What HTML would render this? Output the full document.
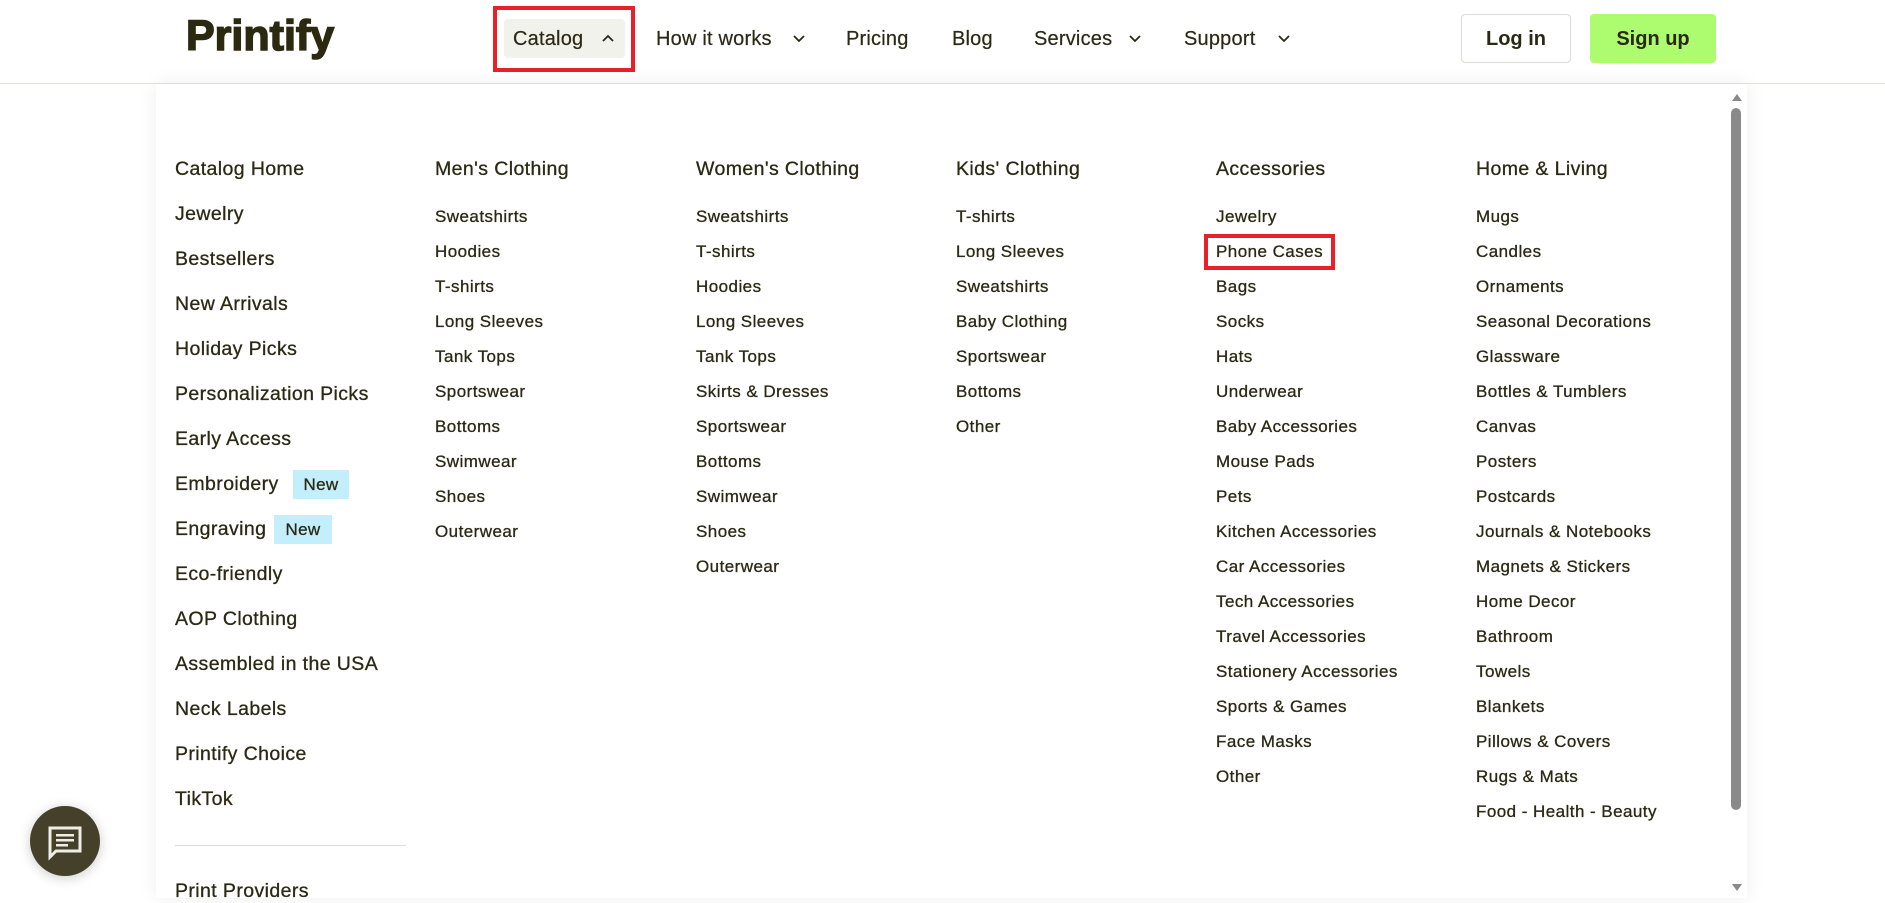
<!DOCTYPE html>
<html><head><meta charset="utf-8"><style>
*{margin:0;padding:0;box-sizing:border-box}
body{width:1885px;height:898px;overflow:hidden;background:#fff;font-family:"Liberation Sans",sans-serif;color:#2b2914;position:relative}
.hdr{position:absolute;left:0;top:0;width:1885px;height:84px;border-bottom:1px solid #e4e2dc;background:#fff}
.nav{position:absolute;top:28px;font-size:20px;color:#2b2914;letter-spacing:.2px;-webkit-text-stroke:.2px #2b2914}
.chev{position:absolute;top:34px;width:14px;height:9px}
.panel{position:absolute;left:156px;top:84px;width:1591px;height:814px;background:#fff;box-shadow:0 0 18px rgba(0,0,0,.07)}
.h{position:absolute;white-space:nowrap;font-size:19.5px;letter-spacing:.4px;line-height:24px;-webkit-text-stroke:.3px #2b2914}
.s{position:absolute;white-space:nowrap;font-size:17px;letter-spacing:.45px;line-height:22px;-webkit-text-stroke:.3px #2b2914}
.new{position:absolute;background:#c3eefc;font-size:17px;letter-spacing:.3px;text-align:center;line-height:29px;-webkit-text-stroke:.3px #2b2914}
</style></head><body>
<div class="hdr">
<div style="position:absolute;left:186px;top:12px;font-size:43px;font-weight:bold;letter-spacing:0px;color:#2b2a10;-webkit-text-stroke:1.5px #2b2a10">Printify</div>
<div style="position:absolute;left:493px;top:6px;width:142px;height:66px;border:4px solid #e8202a"></div>
<div style="position:absolute;left:504px;top:19px;width:121px;height:39px;background:#f2f2ec;border-radius:4px"></div>
<div class="nav" style="left:513px">Catalog</div>
<svg class="chev" style="left:601px" viewBox="0 0 14 9"><path d="M2 7L7 2L12 7" stroke="#2b2914" stroke-width="1.8" fill="none"/></svg>
<div class="nav" style="left:656px">How it works</div>
<svg class="chev" style="left:792px" viewBox="0 0 14 9"><path d="M2 2L7 7L12 2" stroke="#2b2914" stroke-width="1.8" fill="none"/></svg>
<div class="nav" style="left:846px">Pricing</div>
<div class="nav" style="left:952px">Blog</div>
<div class="nav" style="left:1034px">Services</div>
<svg class="chev" style="left:1128px" viewBox="0 0 14 9"><path d="M2 2L7 7L12 2" stroke="#2b2914" stroke-width="1.8" fill="none"/></svg>
<div class="nav" style="left:1184px">Support</div>
<svg class="chev" style="left:1277px" viewBox="0 0 14 9"><path d="M2 2L7 7L12 2" stroke="#2b2914" stroke-width="1.8" fill="none"/></svg>
<div style="position:absolute;left:1461px;top:14px;width:110px;height:49px;border:1px solid #dcdad2;border-radius:4px;text-align:center;line-height:49px;font-size:20px;font-weight:bold">Log in</div>
<div style="position:absolute;left:1590px;top:14px;width:126px;height:49px;background:#adfc6f;border-radius:4px;text-align:center;line-height:50px;font-size:20px;font-weight:bold">Sign up</div>
</div>
<div class="panel">
<div style="position:absolute;left:1576px;top:10px;width:0;height:0;border-left:5px solid transparent;border-right:5px solid transparent;border-bottom:7px solid #8a8a8a"></div>
<div style="position:absolute;left:1575px;top:24px;width:10px;height:702px;background:#8a8a8a;border-radius:5px"></div>
<div style="position:absolute;left:1576px;top:800px;width:0;height:0;border-left:5px solid transparent;border-right:5px solid transparent;border-top:7px solid #8a8a8a"></div>
</div>
<div id="cols"></div>
<div style="position:absolute;left:175px;top:845px;width:231px;height:1px;background:#dedcd4"></div>
<div class="h" style="left:175px;top:879px">Print Providers</div>
<div class="new" style="left:293px;top:470px;width:56px;height:29px">New</div>
<div class="new" style="left:274px;top:515px;width:58px;height:29px">New</div>
<div style="position:absolute;left:1204px;top:234px;width:131px;height:36px;border:4px solid #e8202a"></div>
<div style="position:absolute;left:30px;top:806px;width:70px;height:70px;border-radius:50%;background:#444029;box-shadow:0 2px 12px rgba(0,0,0,.2)"></div>
<svg style="position:absolute;left:46px;top:823px" width="38" height="38" viewBox="0 0 38 38"><path d="M4 5H34V28H10L4 34Z" fill="none" stroke="#efeee6" stroke-width="3"/><rect x="10" y="11" width="18" height="2.5" fill="#efeee6"/><rect x="10" y="16" width="18" height="2.5" fill="#efeee6"/><rect x="10" y="21" width="12" height="2.5" fill="#efeee6"/></svg>
<script>
var L=["Catalog Home","Jewelry","Bestsellers","New Arrivals","Holiday Picks","Personalization Picks","Early Access","Embroidery","Engraving","Eco-friendly","AOP Clothing","Assembled in the USA","Neck Labels","Printify Choice","TikTok"];
var C=[[435,"Men's Clothing",["Sweatshirts","Hoodies","T-shirts","Long Sleeves","Tank Tops","Sportswear","Bottoms","Swimwear","Shoes","Outerwear"]],
[696,"Women's Clothing",["Sweatshirts","T-shirts","Hoodies","Long Sleeves","Tank Tops","Skirts & Dresses","Sportswear","Bottoms","Swimwear","Shoes","Outerwear"]],
[956,"Kids' Clothing",["T-shirts","Long Sleeves","Sweatshirts","Baby Clothing","Sportswear","Bottoms","Other"]],
[1216,"Accessories",["Jewelry","Phone Cases","Bags","Socks","Hats","Underwear","Baby Accessories","Mouse Pads","Pets","Kitchen Accessories","Car Accessories","Tech Accessories","Travel Accessories","Stationery Accessories","Sports & Games","Face Masks","Other"]],
[1476,"Home & Living",["Mugs","Candles","Ornaments","Seasonal Decorations","Glassware","Bottles & Tumblers","Canvas","Posters","Postcards","Journals & Notebooks","Magnets & Stickers","Home Decor","Bathroom","Towels","Blankets","Pillows & Covers","Rugs & Mats","Food - Health - Beauty"]]];
var h="";
L.forEach(function(t,i){h+='<div class="h" style="left:175px;top:'+(157+i*45)+'px">'+t.replace('&','&amp;')+'</div>';});
C.forEach(function(c){h+='<div class="h" style="left:'+c[0]+'px;top:157px">'+c[1]+'</div>';
c[2].forEach(function(t,i){h+='<div class="s" style="left:'+c[0]+'px;top:'+(206+i*35)+'px">'+t.replace(/&/g,'&amp;')+'</div>';});});
document.getElementById('cols').innerHTML=h;
</script>
</body></html>
